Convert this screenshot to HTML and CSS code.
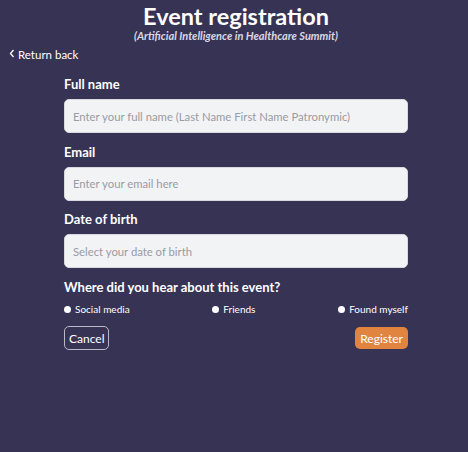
FILE: index.html
```html
<!DOCTYPE html>
<html>
<head>
<meta charset="utf-8">
<link rel="stylesheet" href="styles.css">
</head>
<body>
<header class="head">
  <h1 class="title">Event registration</h1>
  <p class="subtitle">(Artificial Intelligence in Healthcare Summit)</p>
</header>
<a class="back" href="#"><svg class="chev" width="6" height="9" viewBox="0 0 6 9"><path d="M4.5 1 L1.5 4.5 L4.5 8" fill="none" stroke="#fff" stroke-width="1.3"/></svg>Return back</a>
<form class="form">
  <div class="field">
    <label class="label">Full name</label>
    <input class="input" type="text" placeholder="Enter your full name (Last Name First Name Patronymic)">
  </div>
  <div class="field">
    <label class="label">Email</label>
    <input class="input" type="text" placeholder="Enter your email here">
  </div>
  <div class="field">
    <label class="label">Date of birth</label>
    <input class="input" type="text" placeholder="Select your date of birth">
  </div>
  <div class="field">
    <span class="label">Where did you hear about this event?</span>
    <div class="radios">
      <label class="radio"><span class="dot"></span>Social media</label>
      <label class="radio"><span class="dot"></span>Friends</label>
      <label class="radio"><span class="dot"></span>Found myself</label>
    </div>
  </div>
  <div class="actions">
    <button type="button" class="btn cancel">Cancel</button>
    <button type="button" class="btn register">Register</button>
  </div>
</form>
</body>
</html>
```
FILE: styles.css
```css
html, body { margin: 0; padding: 0; }
body {
  background: #373355;
  color: #fff;
  font-family: Lato, "Open Sans", sans-serif;
  width: 468px;
  height: 452px;
}
.head { text-align: center; padding-left: 4px; }
.title {
  margin: 0;
  padding-top: 3px;
  font-size: 23.5px;
  line-height: 26px;
  font-weight: 700;
}
.subtitle {
  margin: 0;
  font-size: 11px;
  line-height: 13px;
  font-style: italic;
  font-weight: 700;
  color: #d9d8e2;
}
.back {
  display: flex;
  align-items: center;
  gap: 3px;
  margin: 5px 0 0 9px;
  color: #fff;
  text-decoration: none;
  font-size: 11.5px;
  line-height: 16px;
  width: max-content;
}
.chev { margin-top: -3px; }
.form {
  margin: 13px 0 0 64px;
  width: 344px;
  display: flex;
  flex-direction: column;
}
.field { display: flex; flex-direction: column; margin-bottom: 10.5px; }
.label {
  font-weight: 700;
  font-size: 13px;
  line-height: 16px;
  margin-bottom: 7px;
}
.input {
  box-sizing: border-box;
  height: 34px;
  width: 344px;
  background: #f2f3f5;
  border: 1px solid #d8d9de;
  border-radius: 5px;
  padding: 0 8px;
  font-family: inherit;
  font-size: 11.3px;
  outline: none;
}
.input::placeholder { color: #9a9ba3; }
.radios {
  display: flex;
  justify-content: space-between;
  margin-top: 1px;
}
.radio {
  display: flex;
  align-items: center;
  gap: 4px;
  font-size: 10px;
  line-height: 13px;
}
.dot {
  width: 7px;
  height: 7px;
  border-radius: 50%;
  background: #fff;
  display: inline-block;
}
.actions {
  display: flex;
  justify-content: space-between;
  align-items: center;
  margin-top: 0;
}
.btn {
  font-family: inherit;
  font-size: 12px;
  color: #fff;
  border-radius: 5px;
  cursor: pointer;
}
.cancel {
  background: transparent;
  border: 1px solid #b9b8c6;
  height: 24px;
  padding: 0 4px;
}
.register {
  background: #e0843f;
  border: none;
  height: 22px;
  padding: 0 5px;
}
```
